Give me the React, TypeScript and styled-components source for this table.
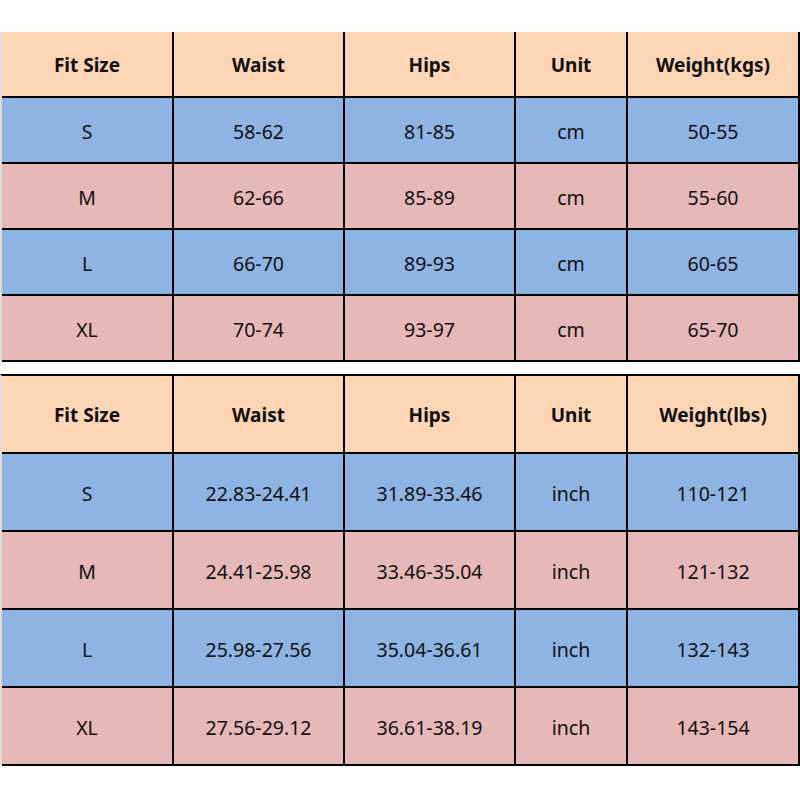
import { FC } from 'react'
import styled, { createGlobalStyle } from 'styled-components'

const GlobalStyle = createGlobalStyle`
	html, body {
		margin: 0;
		padding: 0;
		background: #ffffff;
	}
	body {
		font-family: 'Noto Sans', 'Open Sans', sans-serif;
		color: #111111;
	}
`

const colors = {
	head: '#fcd5b4',
	blue: '#8db4e2',
	pink: '#e6b8b7',
	line: '#000000',
}

const Page = styled.div`
	width: 800px;
	height: 800px;
	padding-top: 32px;
	box-sizing: border-box;
	display: flex;
	flex-direction: column;
	gap: 12px;
`

const Table = styled.div<{ $rowHeight: number; $topLine: boolean }>`
	display: grid;
	grid-template-columns: 172px 171px 171px 112px 172px;
	grid-auto-rows: ${({ $rowHeight }) => $rowHeight}px;
	border-left: 2px solid #e2dcd8;
	border-top: ${({ $topLine }) => ($topLine ? `2px solid ${colors.line}` : 'none')};
	width: 800px;
	box-sizing: border-box;
`

const Cell = styled.div<{ $bg: string; $bold?: boolean }>`
	background: ${({ $bg }) => $bg};
	border-right: 2px solid ${colors.line};
	border-bottom: 2px solid ${colors.line};
	display: flex;
	align-items: center;
	justify-content: center;
	padding-top: 2px;
	font-size: ${({ $bold }) => ($bold ? '19px' : '19.5px')};
	font-weight: ${({ $bold }) => ($bold ? 700 : 400)};
	color: #111111;
`

type SizeTableProps = {
	headers: string[]
	rows: string[][]
	rowHeight: number
	topLine: boolean
}

const SizeTable: FC<SizeTableProps> = ({ headers, rows, rowHeight, topLine }) => (
	<Table $rowHeight={rowHeight} $topLine={topLine}>
		{headers.map((h) => (
			<Cell key={h} $bg={colors.head} $bold>
				{h}
			</Cell>
		))}
		{rows.map((row, i) =>
			row.map((value, j) => (
				<Cell key={`${i}-${j}`} $bg={i % 2 === 0 ? colors.blue : colors.pink}>
					{value}
				</Cell>
			)),
		)}
	</Table>
)

const metricRows = [
	['S', '58-62', '81-85', 'cm', '50-55'],
	['M', '62-66', '85-89', 'cm', '55-60'],
	['L', '66-70', '89-93', 'cm', '60-65'],
	['XL', '70-74', '93-97', 'cm', '65-70'],
]

const imperialRows = [
	['S', '22.83-24.41', '31.89-33.46', 'inch', '110-121'],
	['M', '24.41-25.98', '33.46-35.04', 'inch', '121-132'],
	['L', '25.98-27.56', '35.04-36.61', 'inch', '132-143'],
	['XL', '27.56-29.12', '36.61-38.19', 'inch', '143-154'],
]

const App: FC = () => (
	<>
		<GlobalStyle />
		<Page>
			<SizeTable
				headers={['Fit Size', 'Waist', 'Hips', 'Unit', 'Weight(kgs)']}
				rows={metricRows}
				rowHeight={66}
				topLine={false}
			/>
			<SizeTable
				headers={['Fit Size', 'Waist', 'Hips', 'Unit', 'Weight(lbs)']}
				rows={imperialRows}
				rowHeight={78}
				topLine
			/>
		</Page>
	</>
)

export default App
